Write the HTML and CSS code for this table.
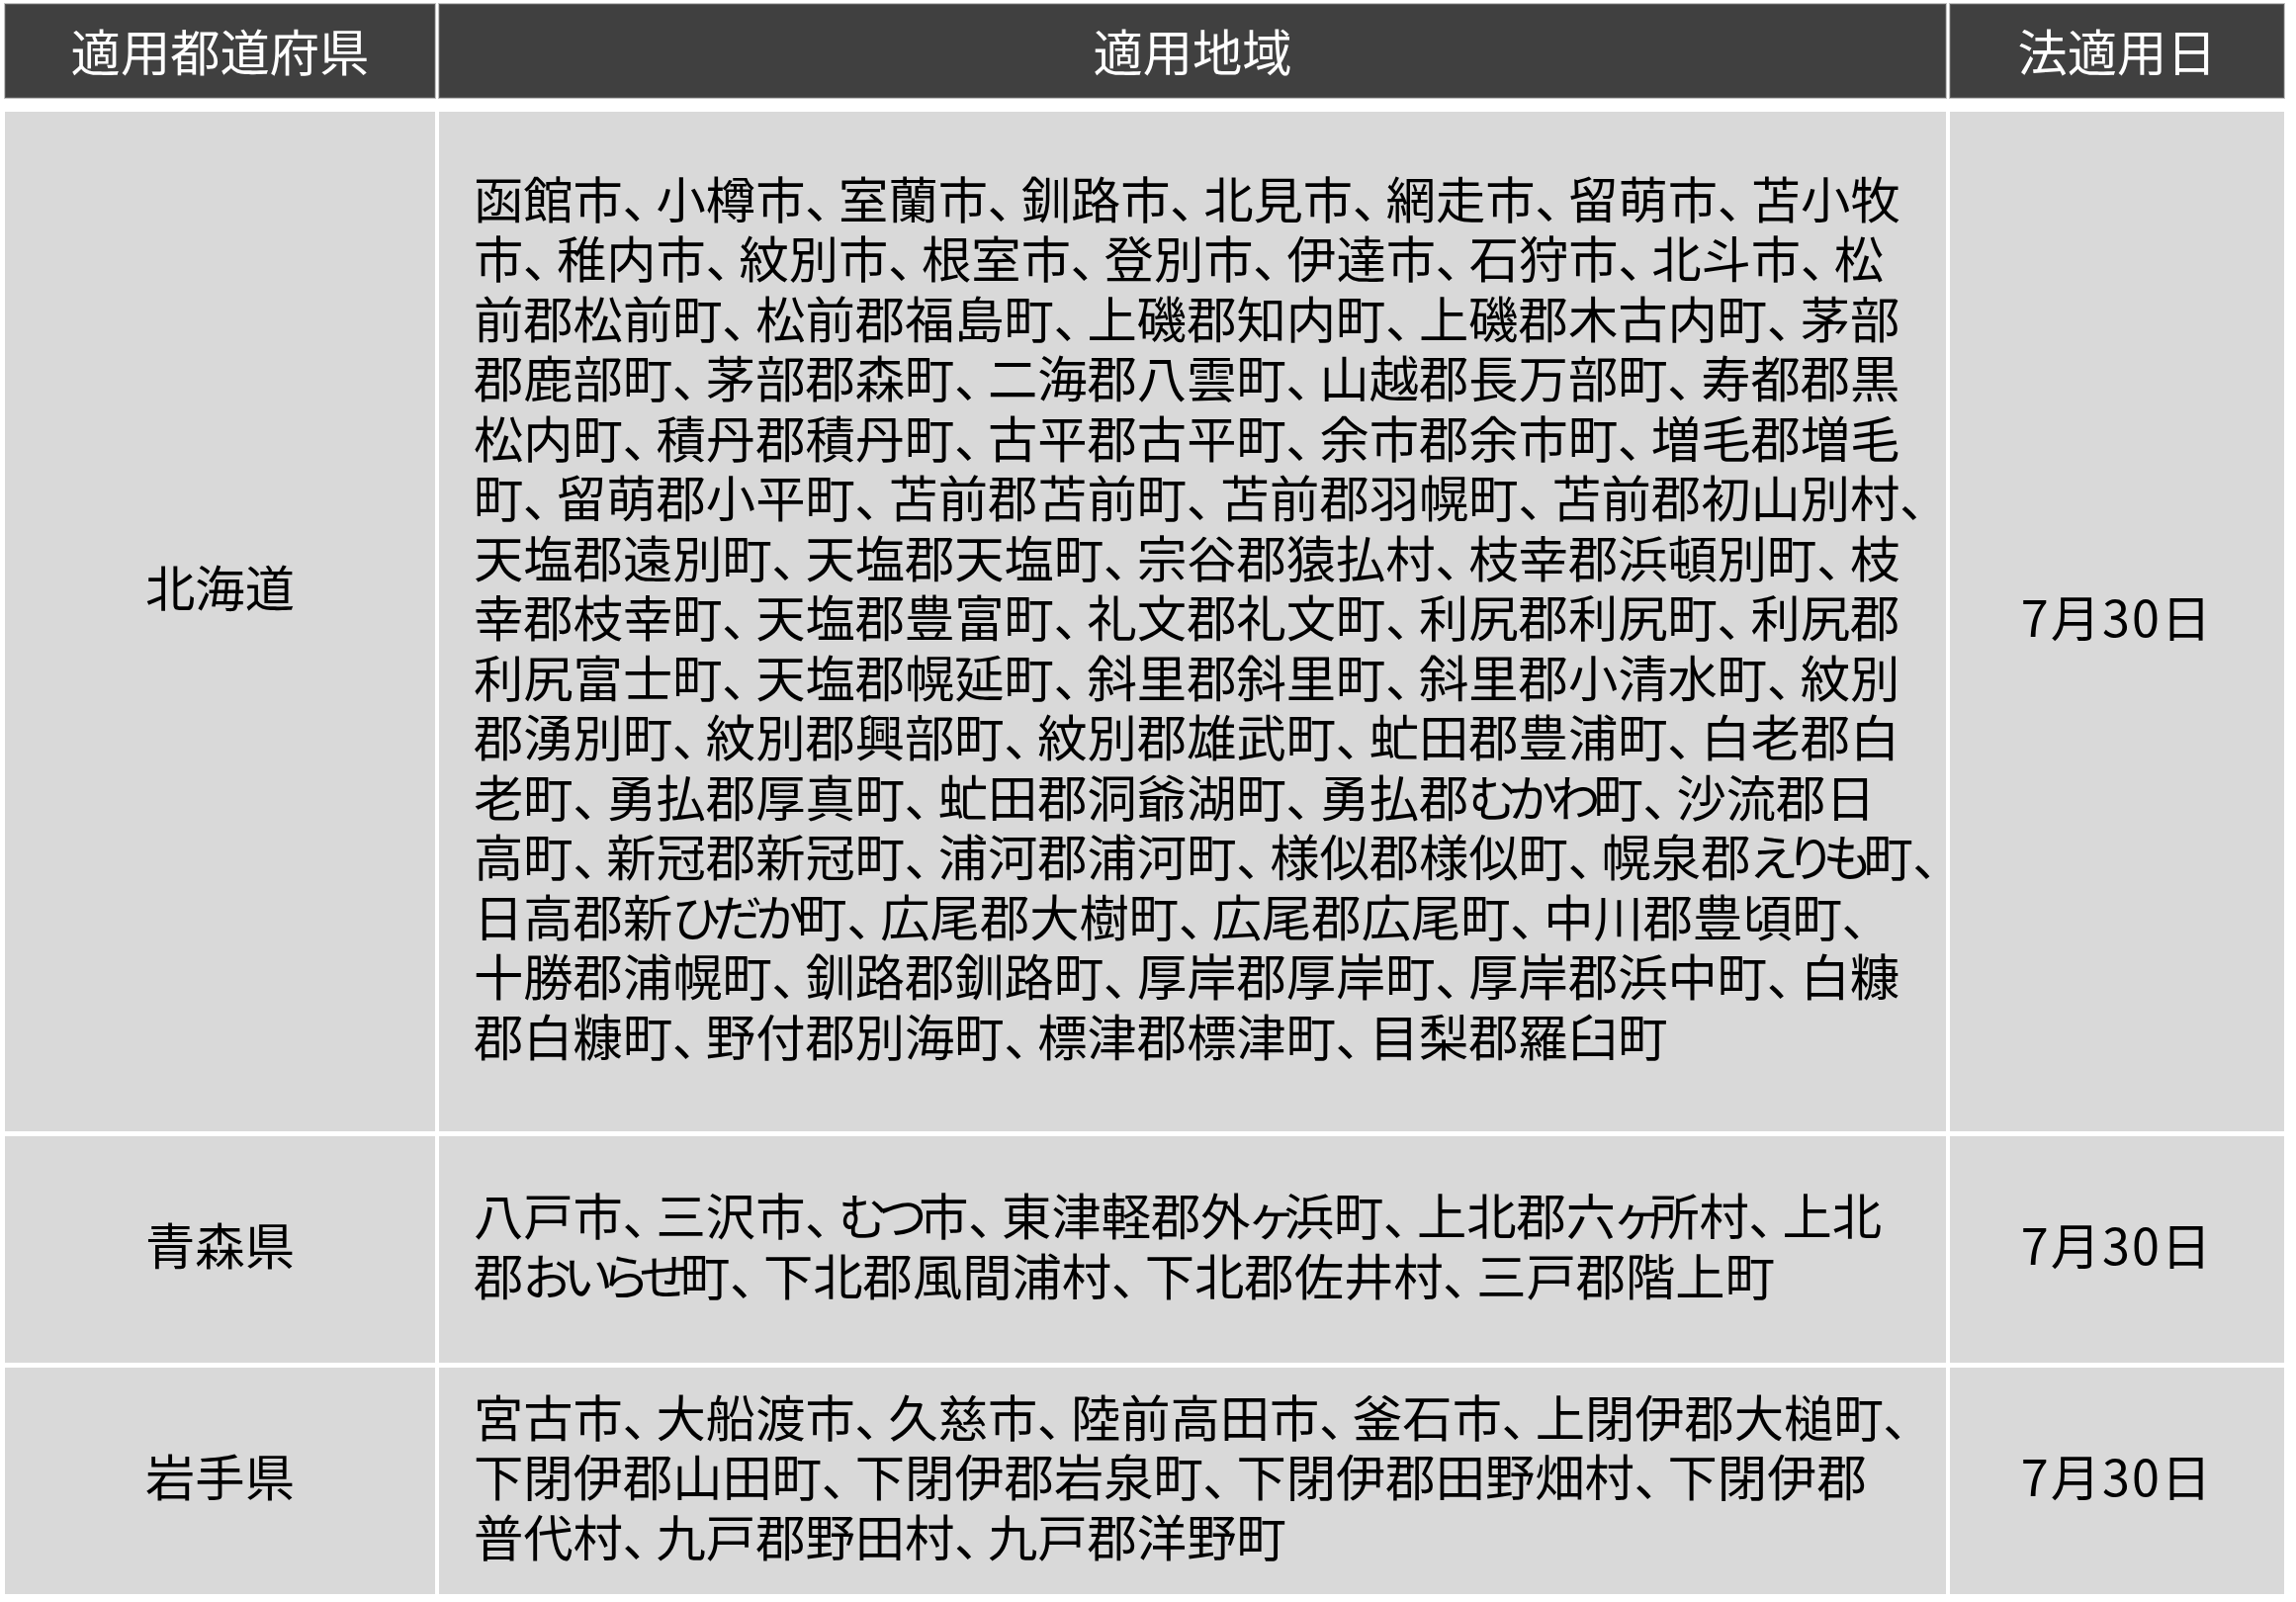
FILE: index.html
```html
<!DOCTYPE html>
<html lang="ja">
<head>
<meta charset="utf-8">
<title>適用地域</title>
<link rel="stylesheet" href="styles.css">
</head>
<body>
<div class="sheet">
  <div class="grid head">
    <div class="cell hcell">適用都道府県</div>
    <div class="cell hcell">適用地域</div>
    <div class="cell hcell">法適用日</div>
  </div>
  <div class="grid body">
    <div class="cell pref pref-hokkaido">北海道</div>
    <div class="cell area"><p class="lines">函館市<span class="t">、</span>小樽市<span class="t">、</span>室蘭市<span class="t">、</span>釧路市<span class="t">、</span>北見市<span class="t">、</span>網走市<span class="t">、</span>留萌市<span class="t">、</span>苫小牧<br>市<span class="t">、</span>稚内市<span class="t">、</span>紋別市<span class="t">、</span>根室市<span class="t">、</span>登別市<span class="t">、</span>伊達市<span class="t">、</span>石狩市<span class="t">、</span>北斗市<span class="t">、</span>松<br>前郡松前町<span class="t">、</span>松前郡福島町<span class="t">、</span>上磯郡知内町<span class="t">、</span>上磯郡木古内町<span class="t">、</span>茅部<br>郡鹿部町<span class="t">、</span>茅部郡森町<span class="t">、</span>二海郡八雲町<span class="t">、</span>山越郡長万部町<span class="t">、</span>寿都郡黒<br>松内町<span class="t">、</span>積丹郡積丹町<span class="t">、</span>古平郡古平町<span class="t">、</span>余市郡余市町<span class="t">、</span>増毛郡増毛<br>町<span class="t">、</span>留萌郡小平町<span class="t">、</span>苫前郡苫前町<span class="t">、</span>苫前郡羽幌町<span class="t">、</span>苫前郡初山別村<span class="t">、</span><br>天塩郡遠別町<span class="t">、</span>天塩郡天塩町<span class="t">、</span>宗谷郡猿払村<span class="t">、</span>枝幸郡浜頓別町<span class="t">、</span>枝<br>幸郡枝幸町<span class="t">、</span>天塩郡豊富町<span class="t">、</span>礼文郡礼文町<span class="t">、</span>利尻郡利尻町<span class="t">、</span>利尻郡<br>利尻富士町<span class="t">、</span>天塩郡幌延町<span class="t">、</span>斜里郡斜里町<span class="t">、</span>斜里郡小清水町<span class="t">、</span>紋別<br>郡湧別町<span class="t">、</span>紋別郡興部町<span class="t">、</span>紋別郡雄武町<span class="t">、</span>虻田郡豊浦町<span class="t">、</span>白老郡白<br>老町<span class="t">、</span>勇払郡厚真町<span class="t">、</span>虻田郡洞爺湖町<span class="t">、</span>勇払郡<span class="k">むかわ</span>町<span class="t">、</span>沙流郡日<br>高町<span class="t">、</span>新冠郡新冠町<span class="t">、</span>浦河郡浦河町<span class="t">、</span>様似郡様似町<span class="t">、</span>幌泉郡<span class="k">えりも</span>町<span class="t">、</span><br>日高郡新<span class="k">ひだか</span>町<span class="t">、</span>広尾郡大樹町<span class="t">、</span>広尾郡広尾町<span class="t">、</span>中川郡豊頃町<span class="t">、</span><br>十勝郡浦幌町<span class="t">、</span>釧路郡釧路町<span class="t">、</span>厚岸郡厚岸町<span class="t">、</span>厚岸郡浜中町<span class="t">、</span>白糠<br>郡白糠町<span class="t">、</span>野付郡別海町<span class="t">、</span>標津郡標津町<span class="t">、</span>目梨郡羅臼町</p></div>
    <div class="cell date">7月30日</div>

    <div class="cell pref">青森県</div>
    <div class="cell area"><p class="lines">八戸市<span class="t">、</span>三沢市<span class="t">、</span><span class="k">むつ</span>市<span class="t">、</span>東津軽郡外<span class="k">ヶ</span>浜町<span class="t">、</span>上北郡六<span class="k">ヶ</span>所村<span class="t">、</span>上北<br>郡<span class="k">おいらせ</span>町<span class="t">、</span>下北郡風間浦村<span class="t">、</span>下北郡佐井村<span class="t">、</span>三戸郡階上町</p></div>
    <div class="cell date">7月30日</div>

    <div class="cell pref">岩手県</div>
    <div class="cell area"><p class="lines">宮古市<span class="t">、</span>大船渡市<span class="t">、</span>久慈市<span class="t">、</span>陸前高田市<span class="t">、</span>釜石市<span class="t">、</span>上閉伊郡大槌町<span class="t">、</span><br>下閉伊郡山田町<span class="t">、</span>下閉伊郡岩泉町<span class="t">、</span>下閉伊郡田野畑村<span class="t">、</span>下閉伊郡<br>普代村<span class="t">、</span>九戸郡野田村<span class="t">、</span>九戸郡洋野町</p></div>
    <div class="cell date">7月30日</div>
  </div>
</div>
</body>
</html>
```

FILE: styles.css
```css
html, body {
  margin: 0;
  padding: 0;
  background: #ffffff;
}

.sheet {
  padding: 4px 12px 8px 5px;
  font-family: "Noto Sans CJK JP", "Noto Sans", sans-serif;
  font-size: 50.3px;
  color: #000000;
}

.grid {
  display: grid;
  grid-template-columns: 435px 1524px 338px;
  column-gap: 4px;
}

.head {
  grid-template-rows: 95px;
}

.body {
  margin-top: 14px;
  grid-template-rows: 1031px 229px 229px;
  row-gap: 5px;
}

.cell {
  display: flex;
  align-items: center;
  background: #d9d9d9;
  line-height: 60.5px;
  box-sizing: border-box;
  padding-bottom: 12px;
}

.hcell {
  justify-content: center;
  background: #404040;
  color: #ffffff;
  box-shadow: 0 0 0 1px #c4c4c4, inset 0 0 0 1px #5a5a5a;
  padding-bottom: 2px;
}

.pref,
.date {
  justify-content: center;
}

.date {
  letter-spacing: 2px;
}

.pref-hokkaido {
  padding-bottom: 72px;
}

.area {
  justify-content: flex-start;
  padding-left: 35px;
}

.lines {
  margin: 0;
  white-space: nowrap;
  font-feature-settings: "palt";
}

.t {
  margin-right: 8.5px;
}

.k {
  letter-spacing: -7px;
}
```
